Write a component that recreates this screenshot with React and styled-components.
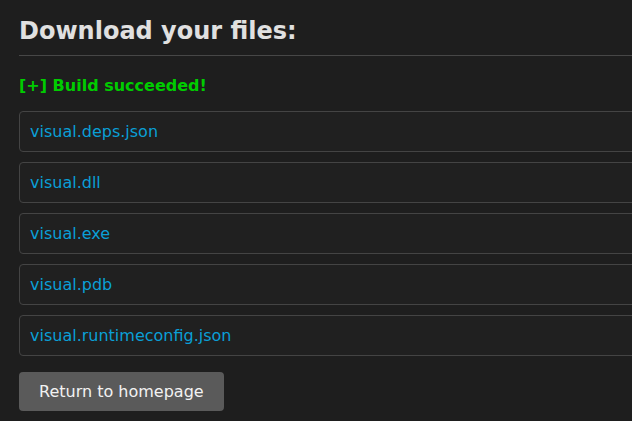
import React from 'react'
import styled, { createGlobalStyle } from 'styled-components'

const files = [
  'visual.deps.json',
  'visual.dll',
  'visual.exe',
  'visual.pdb',
  'visual.runtimeconfig.json',
]

const GlobalStyle = createGlobalStyle`
  html, body {
    margin: 0;
    padding: 0;
    background: #1e1e1e;
    overflow: hidden;
  }
  body {
    font-family: "DejaVu Sans", Verdana, sans-serif;
    color: #e0e0e0;
  }
`

const Page = styled.main`
  width: 800px;
  padding: 17px 19px 0;
`

const Title = styled.h1`
  margin: 0;
  padding-bottom: 10px;
  border-bottom: 1px solid #474747;
  font-size: 24px;
  font-weight: bold;
  color: #e0e0e0;
`

const Status = styled.p`
  margin: 20px 0 16px;
  font-size: 16px;
  font-weight: bold;
  color: #00cc00;
`

const FileList = styled.ul`
  list-style: none;
  margin: 0;
  padding: 0;
  display: flex;
  flex-direction: column;
  gap: 10px;
`

const FileItem = styled.li`
  box-sizing: border-box;
  height: 41px;
  display: flex;
  align-items: center;
  padding: 0 10px;
  border: 1px solid #444;
  border-radius: 4px;
  background: #202020;
`

const FileLink = styled.a`
  font-size: 16px;
  color: #0a9fd6;
  text-decoration: none;
  &:hover {
    text-decoration: underline;
  }
`

const HomeButton = styled.button`
  margin-top: 16px;
  height: 39px;
  padding: 0 20px;
  border: none;
  border-radius: 4px;
  background: #5a5a5a;
  color: #f2f2f2;
  font-family: "DejaVu Sans", Verdana, sans-serif;
  font-size: 16px;
  cursor: pointer;
`

const App = () => {
  return (
    <>
      <GlobalStyle />
      <Page>
        <Title>Download your files:</Title>
        <Status>[+] Build succeeded!</Status>
        <FileList>
          {files.map((f) => (
            <FileItem key={f}>
              <FileLink href={'#' + f}>{f}</FileLink>
            </FileItem>
          ))}
        </FileList>
        <HomeButton>Return to homepage</HomeButton>
      </Page>
    </>
  )
}

export default App
